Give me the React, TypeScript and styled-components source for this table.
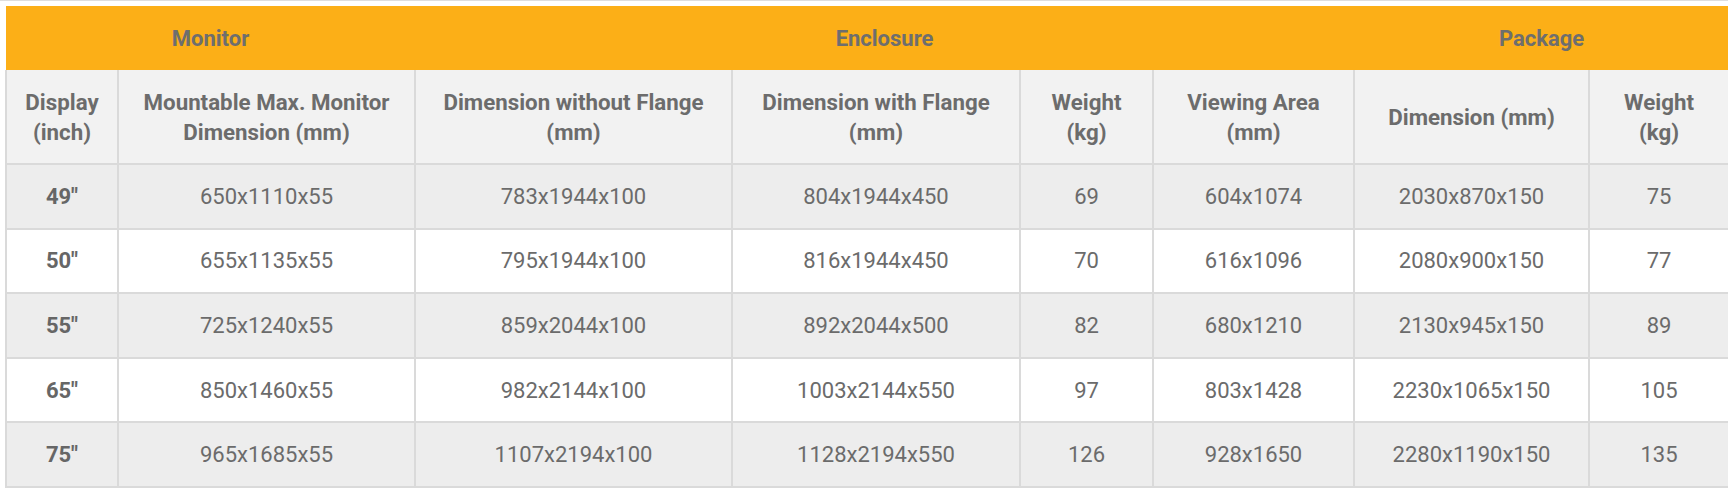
import * as React from "react";
import styled, { createGlobalStyle } from "styled-components";

interface TRowProps {
  striped?: boolean;
}

const GlobalStyle = createGlobalStyle`
  body {
    margin: 0;
    background: #ffffff;
    font-family: Roboto, "Liberation Sans", Arial, sans-serif;
  }
`;

const Page = styled.div`
  border-top: 1px solid #dedede;
  padding: 5px 0 0 5px;
`;

const SpecTable = styled.table`
  width: 1723px;
  table-layout: fixed;
  border-collapse: collapse;
  color: #6a6a6a;
  font-size: 22px;
  text-align: center;
`;

const GroupRow = styled.tr`
  height: 64px;
  background: #fcaf17;
`;

const GroupCell = styled.th`
  font-weight: 700;
  color: #6e6e6e;
  padding: 0;
  border: none;
`;

const HeadRow = styled.tr`
  height: 94px;
  background: #f2f2f2;
`;

const HeadCell = styled.th`
  font-weight: 700;
  font-size: 22.3px;
  line-height: 30px;
  padding: 0 8px;
  border: 2px solid #dadada;
  border-top: none;
  color: #6c6c6c;
`;

const DataRow = styled.tr<TRowProps>`
  height: 64.6px;
  background: ${(props) => (props.striped ? "#ededed" : "#ffffff")};
`;

const DataCell = styled.td<{ bold?: boolean }>`
  font-weight: ${(props) => (props.bold ? 700 : 400)};
  padding: 0;
  border: 2px solid #dadada;
  color: ${(props) => (props.bold ? "#666666" : "#6b6b6b")};
`;

const widths = [112, 297, 317, 288, 133, 201, 235, 140];

const headers = [
  ["Display", "(inch)"],
  ["Mountable Max. Monitor", "Dimension (mm)"],
  ["Dimension without Flange", "(mm)"],
  ["Dimension with Flange", "(mm)"],
  ["Weight", "(kg)"],
  ["Viewing Area", "(mm)"],
  ["Dimension (mm)"],
  ["Weight", "(kg)"],
];

const rows = [
  ['49"', "650x1110x55", "783x1944x100", "804x1944x450", "69", "604x1074", "2030x870x150", "75"],
  ['50"', "655x1135x55", "795x1944x100", "816x1944x450", "70", "616x1096", "2080x900x150", "77"],
  ['55"', "725x1240x55", "859x2044x100", "892x2044x500", "82", "680x1210", "2130x945x150", "89"],
  ['65"', "850x1460x55", "982x2144x100", "1003x2144x550", "97", "803x1428", "2230x1065x150", "105"],
  ['75"', "965x1685x55", "1107x2194x100", "1128x2194x550", "126", "928x1650", "2280x1190x150", "135"],
];

export default function App() {
  return (
    <>
      <GlobalStyle />
      <Page>
        <SpecTable>
          <colgroup>
            {widths.map((w, i) => (
              <col key={i} style={{ width: w }} />
            ))}
          </colgroup>
          <thead>
            <GroupRow>
              <GroupCell colSpan={2}>Monitor</GroupCell>
              <GroupCell colSpan={4}>Enclosure</GroupCell>
              <GroupCell colSpan={2}>Package</GroupCell>
            </GroupRow>
            <HeadRow>
              {headers.map((lines, i) => (
                <HeadCell key={i}>
                  {lines.map((l, j) => (
                    <React.Fragment key={j}>
                      {j > 0 && <br />}
                      {l}
                    </React.Fragment>
                  ))}
                </HeadCell>
              ))}
            </HeadRow>
          </thead>
          <tbody>
            {rows.map((row, i) => (
              <DataRow key={i} striped={i % 2 === 0}>
                {row.map((val, j) => (
                  <DataCell key={j} bold={j === 0}>
                    {val}
                  </DataCell>
                ))}
              </DataRow>
            ))}
          </tbody>
        </SpecTable>
      </Page>
    </>
  );
}
